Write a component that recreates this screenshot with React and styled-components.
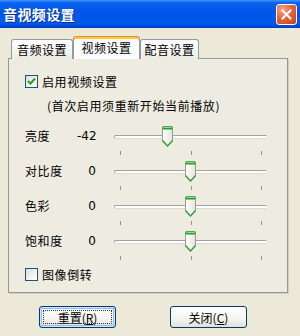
import React from 'react';
import styled, { createGlobalStyle } from 'styled-components';

const GlobalStyle = createGlobalStyle`
    html, body {
        margin: 0;
        padding: 0;
        background: #ECE9D8;
    }
    body {
        font-family: "Noto Sans CJK SC", "Liberation Sans", sans-serif;
        font-size: 12px;
        color: #000;
    }
`;

const Window = styled.div`
    width: 300px;
    height: 336px;
    display: flex;
    flex-direction: column;
    background: #ECE9D8;
    overflow: hidden;
`;

const TitleBar = styled.div`
    height: 28px;
    flex: none;
    display: flex;
    align-items: center;
    justify-content: space-between;
    padding: 0 3px 0 3px;
    background: linear-gradient(to bottom, #3D95FF 0%, #0A62F0 10%, #0055E6 45%, #0058EC 85%, #0047D2 95%, #003DB8 100%);
`;

const Title = styled.div`
    color: #fff;
    font-weight: bold;
    font-size: 14px;
    letter-spacing: 0.4px;
    line-height: 28px;
    text-shadow: 1px 1px 0 #0A2E8C;
`;

const CloseBtn = styled.div`
    width: 21px;
    height: 21px;
    box-sizing: border-box;
    border: 1px solid #fff;
    border-radius: 3px;
    background: radial-gradient(circle at 30% 25%, #F5A68A 0%, #E5643C 45%, #C8401A 100%);
    display: flex;
    align-items: center;
    justify-content: center;
`;

const Body = styled.div`
    flex: 1;
    display: flex;
    flex-direction: column;
    padding-top: 9px;
`;

const TabRow = styled.div`
    display: flex;
    align-items: flex-end;
    height: 22px;
    margin-left: 11px;
    position: relative;
    z-index: 1;
    margin-bottom: -1px;
`;

const Tab = styled.div`
    box-sizing: border-box;
    width: ${p => p.$w}px;
    height: ${p => (p.$active ? 23 : 20)}px;
    display: flex;
    align-items: center;
    justify-content: center;
    padding-bottom: ${p => (p.$active ? 2 : 0)}px;
    font-size: 12px;
    letter-spacing: 0.5px;
    border: 1px solid #919B9C;
    border-bottom: none;
    border-radius: 3px 3px 0 0;
    background: ${p => (p.$active ? '#FCFCFE' : 'linear-gradient(to bottom, #FFFFFF, #ECEBE6)')};
    ${p => p.$active && `
        border-top: 1px solid #E68B2C;
        box-shadow: inset 0 2px 0 #FFC73C;
    `}
`;

const Panel = styled.div`
    box-sizing: border-box;
    height: 235px;
    margin: 0 12px 0 8px;
    border: 1px solid #919B9C;
    box-shadow: 1px 1px 0 #D0CEC0;
    background: #EEECE1;
    padding: 16px 0 0 16px;
    display: flex;
    flex-direction: column;
`;

const CheckRow = styled.label`
    display: flex;
    align-items: center;
    gap: 4px;
    height: 13px;
    margin-top: ${p => p.$mt || 0}px;
    font-size: 12px;
    letter-spacing: 0.6px;
`;

const Box = styled.span`
    box-sizing: border-box;
    width: 13px;
    height: 13px;
    flex: none;
    border: 1px solid #1C5180;
    background: linear-gradient(135deg, #DCDCD7 0%, #F6F6F3 70%, #FFFFFF 100%);
    display: flex;
    align-items: center;
    justify-content: center;
`;

const Note = styled.div`
    margin: 11px 0 0 22px;
    line-height: 14px;
    font-size: 12px;
    letter-spacing: 0.6px;
`;

const Sliders = styled.div`
    margin-top: 12px;
    display: flex;
    flex-direction: column;
`;

const SliderRow = styled.div`
    display: flex;
    align-items: flex-start;
    height: 35px;
`;

const Label = styled.div`
    width: 52px;
    line-height: 22px;
    font-size: 12px;
    letter-spacing: 0.6px;
`;

const Value = styled.div`
    width: 19px;
    line-height: 22px;
    text-align: right;
    font-family: "DejaVu Sans", "Liberation Sans", sans-serif;
    font-size: 12px;
`;

const Track = styled.div`
    position: relative;
    width: 153px;
    height: 35px;
    margin-left: 18px;
`;

const Groove = styled.div`
    position: absolute;
    left: 0;
    right: 0;
    top: 10px;
    height: 2px;
    border-top: 1px solid #A3A29C;
    border-left: 1px solid #A3A29C;
    border-radius: 2px;
    background: #FFFFFF;
    box-shadow: 0 1px 0 #DEDBCD;
`;

const Tick = styled.div`
    position: absolute;
    top: 26px;
    width: 1px;
    height: 4px;
    background: #96958E;
`;

const Thumb = styled.svg`
    position: absolute;
    top: 1px;
`;

const Buttons = styled.div`
    display: flex;
    gap: 54px;
    padding-left: 39px;
    margin-top: 13px;
`;

const Button = styled.div`
    position: relative;
    box-sizing: border-box;
    width: 77px;
    height: 22px;
    border: 1px solid #003C74;
    border-radius: 3px;
    background: linear-gradient(to bottom, #FFFFFF 0%, #F4F4F0 60%, #E3E1D6 100%);
    display: flex;
    align-items: center;
    justify-content: center;
    font-size: 12px;
    ${p => p.$focused && `
        box-shadow: inset 0 0 0 1px #CEE7FF, inset 0 0 0 2px #98B8EA;
        &::after {
            content: '';
            position: absolute;
            inset: 3px;
            border: 1px dotted #333;
        }
    `}
`;

const SliderThumb = ({ left }) => (
    <Thumb width="11" height="21" viewBox="0 0 11 21" style={{ left }}>
        <defs>
            <linearGradient id="tb" x1="0" x2="1" y1="0" y2="0">
                <stop offset="0" stopColor="#FFFFFF" />
                <stop offset="1" stopColor="#E4E3DC" />
            </linearGradient>
        </defs>
        <path d="M1.5 0.5 H9.5 Q10.5 0.5 10.5 1.5 V15 L5.5 20 L0.5 15 V1.5 Q0.5 0.5 1.5 0.5 Z" fill="url(#tb)" stroke="#9A9A90" />
        <path d="M10.5 14.5 L5.5 20 L0.5 14.5" fill="none" stroke="#3A9E3A" strokeWidth="1.4" />
        <rect x="0.5" y="0.5" width="10" height="3" rx="1" fill="#25A125" />
        <rect x="1.5" y="1" width="8" height="1" fill="#8BE58B" />
    </Thumb>
);

const Slider = ({ value }) => {
    const min = -128;
    const max = 127;
    const pos = 6 + ((value - min) / (max - min)) * 141;
    return (
        <Track>
            <Groove />
            <Tick style={{ left: 6 }} />
            <Tick style={{ left: 77 }} />
            <Tick style={{ left: 147 }} />
            <SliderThumb left={Math.round(pos - 5.5)} />
        </Track>
    );
};

const Check = () => (
    <svg width="9" height="9" viewBox="0 0 9 9">
        <path d="M1 4 L3.5 6.5 L8 1.5" fill="none" stroke="#21A121" strokeWidth="2" />
    </svg>
);

const rows = [
    { label: '亮度', value: -42 },
    { label: '对比度', value: 0 },
    { label: '色彩', value: 0 },
    { label: '饱和度', value: 0 },
];

export default function App() {
    return (
        <>
            <GlobalStyle />
            <Window>
                <TitleBar>
                    <Title>音视频设置</Title>
                    <CloseBtn>
                        <svg width="11" height="11" viewBox="0 0 11 11">
                            <path d="M1.5 1.5 L9.5 9.5 M9.5 1.5 L1.5 9.5" stroke="#fff" strokeWidth="2" strokeLinecap="square" />
                        </svg>
                    </CloseBtn>
                </TitleBar>
                <Body>
                    <TabRow>
                        <Tab $w={62}>音频设置</Tab>
                        <Tab $w={67} $active>视频设置</Tab>
                        <Tab $w={59}>配音设置</Tab>
                    </TabRow>
                    <Panel>
                        <CheckRow>
                            <Box><Check /></Box>
                            启用视频设置
                        </CheckRow>
                        <Note>(首次启用须重新开始当前播放)</Note>
                        <Sliders>
                            {rows.map(r => (
                                <SliderRow key={r.label}>
                                    <Label>{r.label}</Label>
                                    <Value>{r.value}</Value>
                                    <Slider value={r.value} />
                                </SliderRow>
                            ))}
                        </Sliders>
                        <CheckRow $mt={3}>
                            <Box />
                            图像倒转
                        </CheckRow>
                    </Panel>
                    <Buttons>
                        <Button $focused>重置(<u>R</u>)</Button>
                        <Button>关闭(<u>C</u>)</Button>
                    </Buttons>
                </Body>
            </Window>
        </>
    );
}
